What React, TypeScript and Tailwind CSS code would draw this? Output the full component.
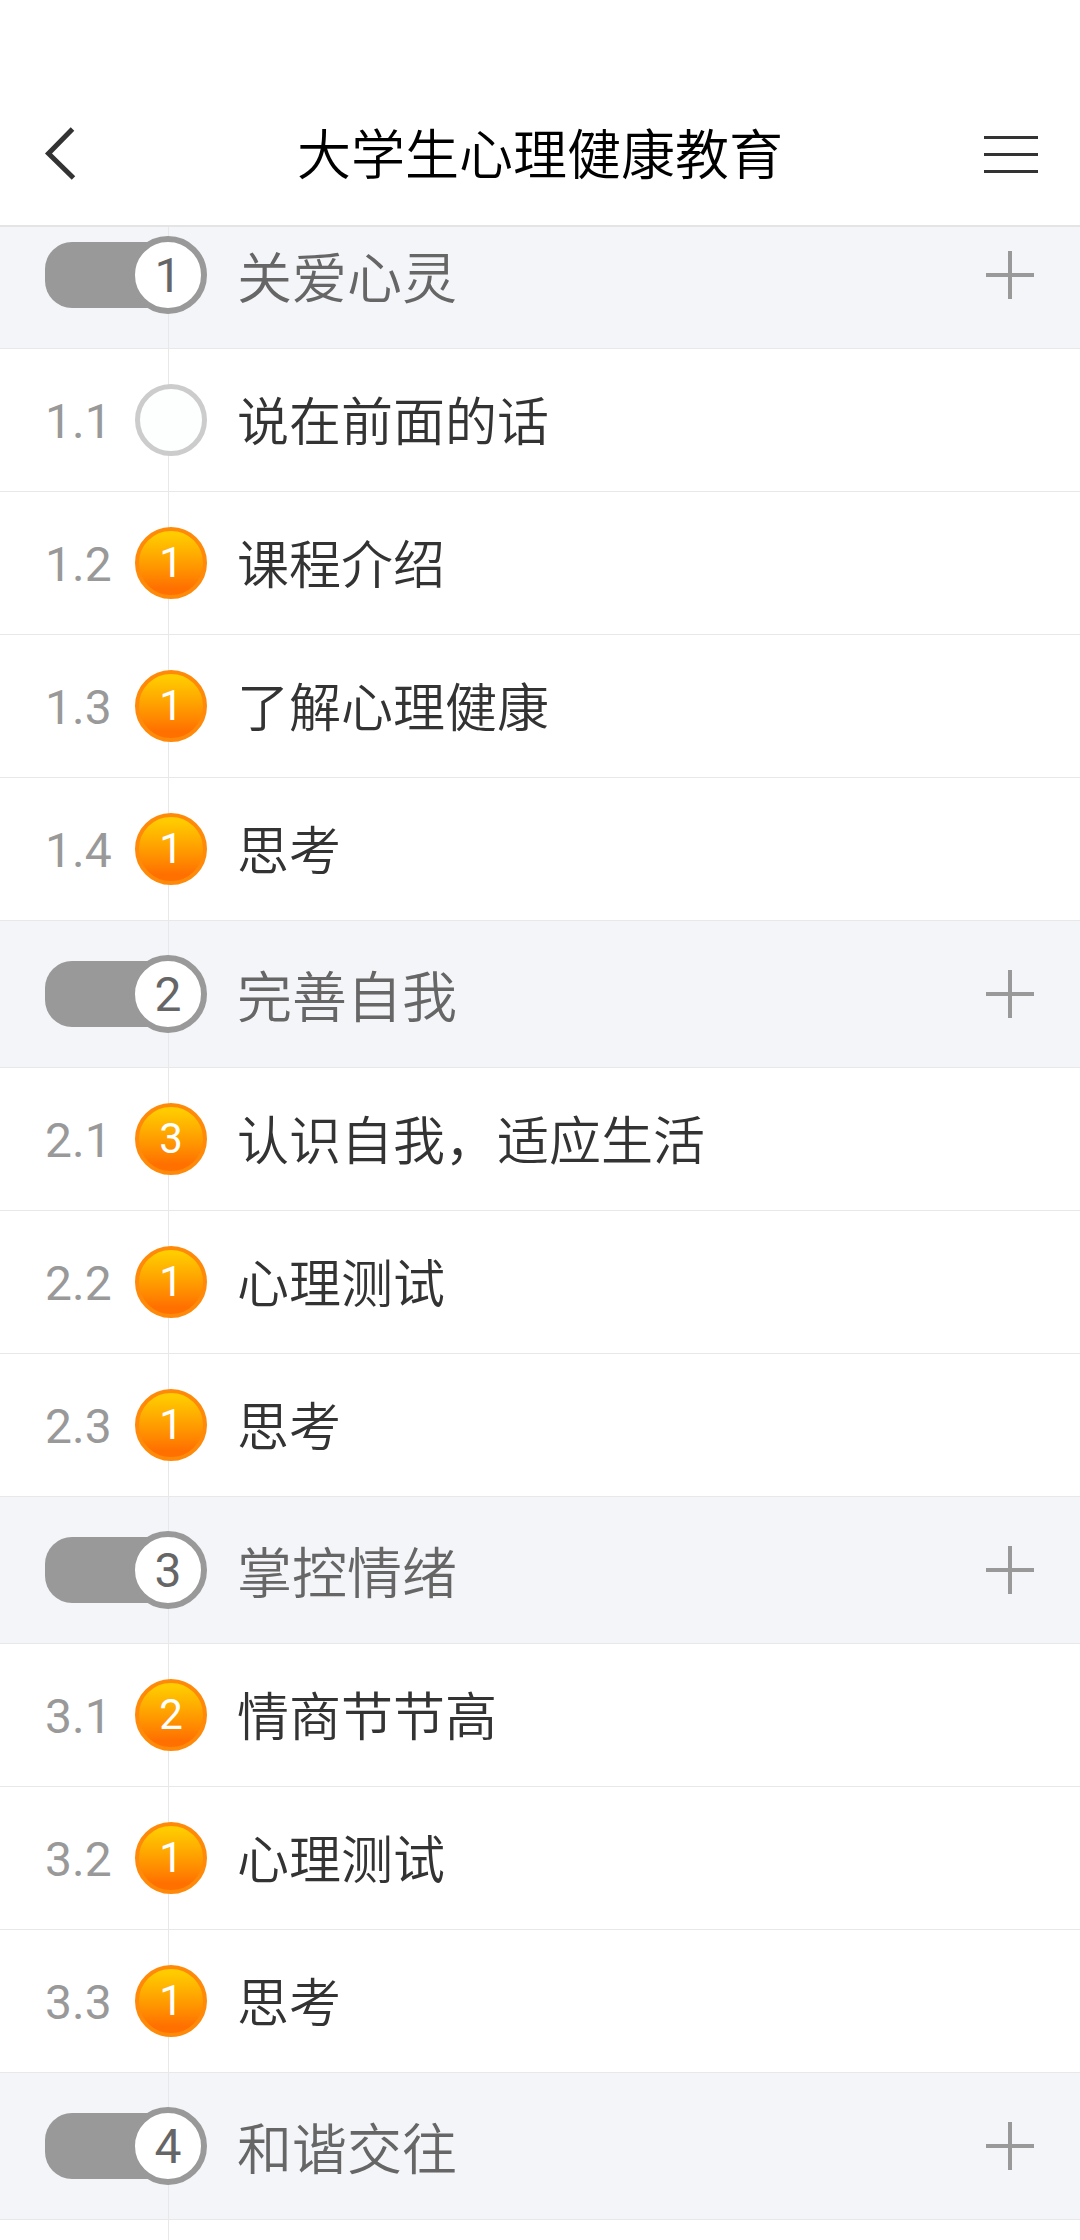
interface Lesson {
  title: string;
  points: number;
}

interface Chapter {
  title: string;
  lessons: Lesson[];
}

const chapters: Chapter[] = [
  {
    title: '关爱心灵',
    lessons: [
      { title: '说在前面的话', points: 0 },
      { title: '课程介绍', points: 1 },
      { title: '了解心理健康', points: 1 },
      { title: '思考', points: 1 },
    ],
  },
  {
    title: '完善自我',
    lessons: [
      { title: '认识自我，适应生活', points: 3 },
      { title: '心理测试', points: 1 },
      { title: '思考', points: 1 },
    ],
  },
  {
    title: '掌控情绪',
    lessons: [
      { title: '情商节节高', points: 2 },
      { title: '心理测试', points: 1 },
      { title: '思考', points: 1 },
    ],
  },
  { title: '和谐交往', lessons: [] },
];

function Header() {
  return (
    <header className="relative z-10 flex items-center justify-between border-b-2 border-[#e4e4e4] bg-white px-10 pt-20">
      <button type="button" aria-label="返回" className="flex h-[145px] w-16 items-center">
        <svg viewBox="0 0 44 64" className="h-16 w-11" fill="none" stroke="#333" strokeWidth="5">
          <path d="M32.5 8 8.5 32.5l25 24.5" />
        </svg>
      </button>
      <h1 className="pt-2 text-[54px] leading-none font-[350] text-black">大学生心理健康教育</h1>
      <button type="button" aria-label="菜单" className="flex h-[145px] w-16 items-center justify-end">
        <svg viewBox="0 0 56 64" className="h-16 w-14" fill="none" stroke="#333" strokeWidth="3">
          <path d="M0 16.5h54M0 33.5h54M0 50.5h54" />
        </svg>
      </button>
    </header>
  );
}

function ChapterRow({ index, title }: { index: number; title: string }) {
  return (
    <div className="flex h-[147px] items-center border-b border-[#e8e8e8] bg-[#f4f5f8] pr-[46px] pl-[45px]">
      {/* Chapter number */}
      <div className="relative flex h-[66px] w-[162px] items-center justify-end rounded-l-[27px] bg-[linear-gradient(to_right,#999_75%,transparent_75%)]">
        <span className="flex size-[78px] shrink-0 items-center justify-center rounded-full border-6 border-[#999] bg-white pt-0.5 text-5xl leading-none text-[#666]">
          {index}
        </span>
      </div>
      <h2 className="ml-[30px] flex-1 pt-2 text-[55px] leading-none font-[350] text-[#666]">{title}</h2>
      <button type="button" aria-label={`展开${title}`} className="size-12">
        <svg viewBox="0 0 48 48" className="size-12" stroke="#999" strokeWidth="4">
          <path d="M0 24h48M24 0v48" />
        </svg>
      </button>
    </div>
  );
}

function LessonRow({ label, lesson }: { label: string; lesson: Lesson }) {
  return (
    <li className="border-b border-[#e8e8e8]">
      <a href="#" className="flex h-[142px] items-center px-[45px]">
        <span className="w-[90px] pt-1 text-5xl leading-none text-[#999]">{label}</span>
        {lesson.points > 0 ? (
          <span className="relative flex size-[72px] items-center justify-center rounded-full border-4 border-[#ff8a0a] bg-linear-to-b from-[#ffcc00] from-10% to-[#ff7000] to-85% bg-origin-border text-[42px] leading-none text-white">
            {lesson.points}
          </span>
        ) : (
          <span className="relative size-[72px] rounded-full border-5 border-[#ccc] bg-[#fcfffd]" />
        )}
        <span className="ml-[30px] flex-1 pt-2 text-[52px] leading-none font-[350] text-[#333]">{lesson.title}</span>
      </a>
    </li>
  );
}

export default function App() {
  return (
    <div className="flex min-h-screen flex-col overflow-hidden bg-white font-['Roboto','Noto_Sans_CJK_SC',sans-serif]">
      <Header />

      {/* The list is scrolled a little way under the header */}
      <main className="relative -mt-[25px] flex-1">
        {/* Timeline */}
        <div className="absolute inset-y-0 left-[168px] w-px bg-[#e8e8e8]" />

        {chapters.map((chapter, i) => (
          <section key={chapter.title}>
            <ChapterRow index={i + 1} title={chapter.title} />
            <ul>
              {chapter.lessons.map((lesson, j) => (
                <LessonRow key={j} label={`${i + 1}.${j + 1}`} lesson={lesson} />
              ))}
            </ul>
          </section>
        ))}
      </main>
    </div>
  );
}
